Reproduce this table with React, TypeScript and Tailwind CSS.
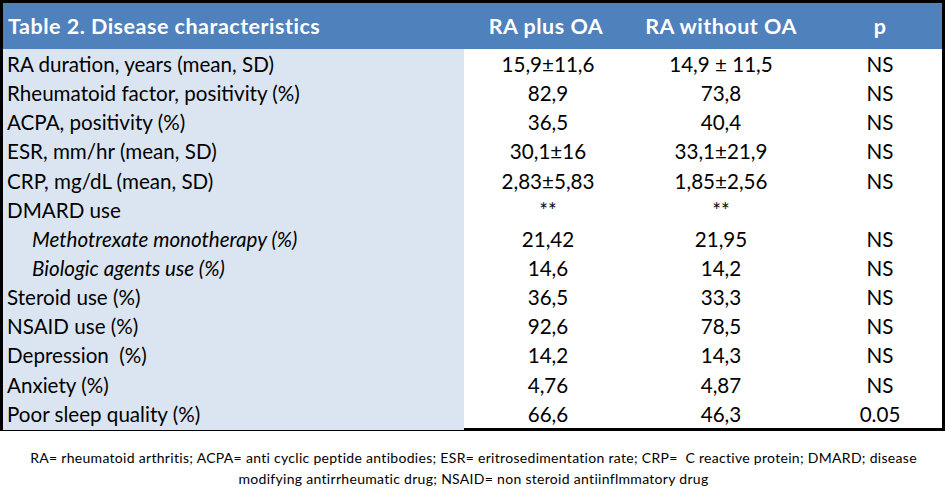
import React from 'react';

type Row = { label: string; a: string; b: string; p: string; sub?: boolean };

const rows: Row[] = [
  { label: 'RA duration, years (mean, SD)', a: '15,9±11,6', b: '14,9 ± 11,5', p: 'NS' },
  { label: 'Rheumatoid factor, positivity (%)', a: '82,9', b: '73,8', p: 'NS' },
  { label: 'ACPA, positivity (%)', a: '36,5', b: '40,4', p: 'NS' },
  { label: 'ESR, mm/hr (mean, SD)', a: '30,1±16', b: '33,1±21,9', p: 'NS' },
  { label: 'CRP, mg/dL (mean, SD)', a: '2,83±5,83', b: '1,85±2,56', p: 'NS' },
  { label: 'DMARD use', a: '**', b: '**', p: '' },
  { label: 'Methotrexate monotherapy (%)', a: '21,42', b: '21,95', p: 'NS', sub: true },
  { label: 'Biologic agents use (%)', a: '14,6', b: '14,2', p: 'NS', sub: true },
  { label: 'Steroid use (%)', a: '36,5', b: '33,3', p: 'NS' },
  { label: 'NSAID use (%)', a: '92,6', b: '78,5', p: 'NS' },
  { label: 'Depression  (%)', a: '14,2', b: '14,3', p: 'NS' },
  { label: 'Anxiety (%)', a: '4,76', b: '4,87', p: 'NS' },
  { label: 'Poor sleep quality (%)', a: '66,6', b: '46,3', p: '0.05' },
];

const cols = 'grid grid-cols-[461px_164px_186px_128px]';

export default function App() {
  return (
    <div className="w-[947px] h-[490px] bg-white text-black font-['Lato',sans-serif] overflow-hidden">
      <div className="w-[945px] border-[3px] border-black">
        <div className={`${cols} h-[46px] bg-[#4f81bd] text-white font-bold text-[21.5px] tracking-[0.5px] items-center`}>
          <div className="pl-[5px] whitespace-pre">Table 2. Disease characteristics</div>
          <div className="text-center">RA plus OA</div>
          <div className="text-center">RA without OA</div>
          <div className="text-center pl-1">p</div>
        </div>
        {rows.map((r) => (
          <div key={r.label} className={`${cols} h-[29.15px] items-center text-[20.6px]`}>
            <div
              className={`bg-[#dbe5f1] h-full flex items-center whitespace-pre ${
                r.sub ? 'pl-[29px] italic' : 'pl-[4px]'
              }`}
            >
              {r.label}
            </div>
            <div className="text-center pl-1">{r.a}</div>
            <div className="text-center">{r.b}</div>
            <div className="text-center pl-1">{r.p}</div>
          </div>
        ))}
      </div>
      <div className="mt-[16px] text-center text-[14px] tracking-[0.3px] leading-[21px] whitespace-pre">
        <div>RA= rheumatoid arthritis; ACPA= anti cyclic peptide antibodies; ESR= eritrosedimentation rate; CRP=  C reactive protein; DMARD; disease</div>
        <div>modifying antirrheumatic drug; NSAID= non steroid antiinflmmatory drug</div>
      </div>
    </div>
  );
}
